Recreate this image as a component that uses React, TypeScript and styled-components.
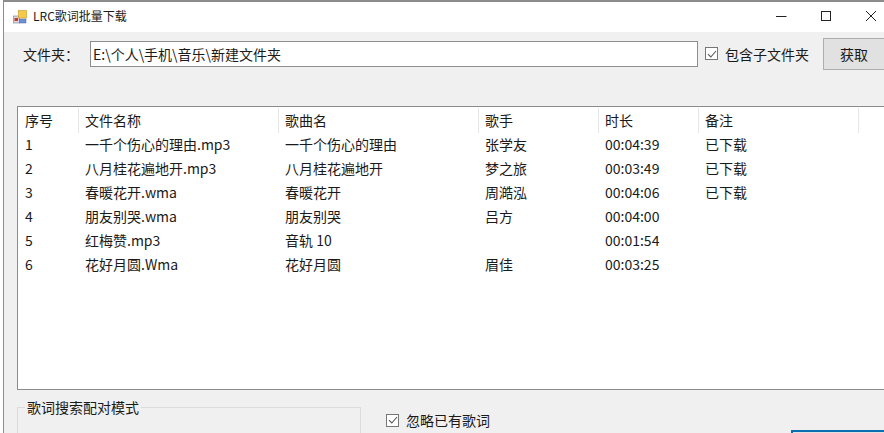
import React from "react";
import styled, { createGlobalStyle } from "styled-components";

const Global = createGlobalStyle`
  html, body { margin: 0; padding: 0; background: #fff; overflow: hidden; }
  body { font-family: "Noto Sans CJK SC", "Liberation Sans", sans-serif; font-size: 14px; color: #1a1a1a; }
`;
const Frame = styled.div`
  width: 884px; height: 433px; overflow: hidden; box-sizing: border-box;
  padding-left: 3px; background: #fff; display: flex;
`;
const Win = styled.div`
  flex: 1; min-width: 0; display: flex; flex-direction: column;
  border-left: 1px solid #8c8c8c; border-top: 2px solid #8c8c8c;
`;
const TitleBar = styled.div`
  height: 30px; background: #fff; display: flex; align-items: center; padding-left: 9px; flex: none;
`;
const TitleText = styled.span`
  font-size: 12px; margin-left: 6px; line-height: 16px; position: relative; top: -1px;
`;
const WinButtons = styled.div`
  margin-left: auto; display: flex; align-items: center; height: 100%;
`;
const WinBtn = styled.div`
  width: 45px; height: 100%; display: flex; align-items: center; justify-content: center;
  position: relative; top: -1px; left: 9px;
`;
const Body = styled.div`
  flex: 1; background: #f0f0f0; display: flex; flex-direction: column; min-height: 0;
`;
const PathRow = styled.div`
  display: flex; align-items: center; height: 37px; margin-top: 3px; padding-left: 19px; flex: none;
`;
const PathLabel = styled.span`
  width: 67px; flex: none; line-height: 18px;
`;
const PathInput = styled.div`
  width: 608px; height: 26px; box-sizing: border-box; flex: none; background: #fff;
  border: 1px solid #8e8e8e; padding-left: 2px; line-height: 25px;
`;
const Check = styled.span`
  width: 11px; height: 11px; border: 1px solid #767676; background: #fff; flex: none;
  display: inline-flex; align-items: center; justify-content: center;
`;
const CheckRow = styled.label`
  display: flex; align-items: center; gap: 7px; line-height: 18px; white-space: nowrap; flex: none;
`;
const TopCheck = styled(CheckRow)`margin-left: 7px;`;
const FetchBtn = styled.button`
  width: 62px; height: 32px; margin-left: 14px; flex: none; font: inherit; color: inherit;
  background: #e1e1e1; border: 1px solid #adadad; padding: 0;
`;
const Table = styled.div`
  margin: 34px 0 0 13px; height: 284px; box-sizing: border-box; flex: none; background: #fff;
  border-top: 1px solid #8c8c8c; border-left: 1px solid #8c8c8c; border-bottom: 1px solid #8c8c8c;
  padding-top: 1px;
`;
const cols = "61px 200px 200px 120px 100px 160px 1fr";
const Header = styled.div`
  display: grid; grid-template-columns: ${cols}; height: 24px;
`;
const HeadCell = styled.div`
  padding-left: 6px; line-height: 25px; border-right: 1px solid #e6e6e6;
  &:first-child { padding-left: 7px; }
  &:last-child { border-right: 0; }
`;
const Row = styled.div`
  display: grid; grid-template-columns: ${cols}; height: 24px; line-height: 24px;
`;
const Cell = styled.div`
  padding-left: 6px; white-space: nowrap; overflow: hidden;
  &:first-child { padding-left: 7px; }
`;
const Bottom = styled.div`
  display: flex; margin: 0 0 0 13px; flex: 1; position: relative; min-height: 0;
`;
const Group = styled.fieldset`
  width: 344px; box-sizing: border-box; margin: 8px 0 0 0; padding: 0; height: 40px; flex: none;
  border: 1px solid #dcdcdc;
`;
const Legend = styled.legend`
  margin-left: 7px; padding: 0 2px 0 2px; line-height: 18px;
`;
const BottomCheck = styled(CheckRow)`
  margin: 21px 0 0 25px; height: 18px;
`;
const BlueButton = styled.div`
  position: absolute; left: 775px; top: 41px; width: 100px; height: 30px;
  background: #e1e1e1; border: 1px solid #0a6fb0; box-shadow: 0 0 0 1px #0a6fb0;
`;

const tick = (
  <svg width="10" height="10" viewBox="0 0 10 10"><path d="M1 5.2 L3.8 8 L9 2" fill="none" stroke="#555" strokeWidth="1.1" /></svg>
);
const AppIcon = () => (
  <svg width="14" height="14" viewBox="0 0 14 14">
    <rect x="0.5" y="6" width="6" height="7" fill="#d9d9e3" stroke="#7a7a8c" strokeWidth="0.6" />
    <rect x="1.5" y="8" width="3.5" height="3" fill="#c73b1f" />
    <rect x="5.5" y="0.5" width="8" height="7.5" fill="#f6c94a" stroke="#c79a25" strokeWidth="0.6" />
    <rect x="6.5" y="9" width="6.5" height="4" fill="#6e8fd6" stroke="#4a64a8" strokeWidth="0.5" />
  </svg>
);

const heads = ["序号", "文件名称", "歌曲名", "歌手", "时长", "备注", ""];
const rows = [
  ["1", "一千个伤心的理由.mp3", "一千个伤心的理由", "张学友", "00:04:39", "已下载"],
  ["2", "八月桂花遍地开.mp3", "八月桂花遍地开", "梦之旅", "00:03:49", "已下载"],
  ["3", "春暖花开.wma", "春暖花开", "周澔泓", "00:04:06", "已下载"],
  ["4", "朋友别哭.wma", "朋友别哭", "吕方", "00:04:00", ""],
  ["5", "红梅赞.mp3", "音轨 10", "", "00:01:54", ""],
  ["6", "花好月圆.Wma", "花好月圆", "眉佳", "00:03:25", ""],
];

export default function App() {
  return (
    <Frame>
      <Global />
      <Win>
        <TitleBar>
          <AppIcon />
          <TitleText>LRC歌词批量下载</TitleText>
          <WinButtons>
            <WinBtn><svg width="12" height="12" viewBox="0 0 12 12"><path d="M1 6.5H11.5" stroke="#222" /></svg></WinBtn>
            <WinBtn><svg width="12" height="12" viewBox="0 0 12 12"><rect x="1.5" y="1.5" width="9" height="9" fill="none" stroke="#222" /></svg></WinBtn>
            <WinBtn><svg width="12" height="12" viewBox="0 0 12 12"><path d="M1 1L11 11M11 1L1 11" stroke="#222" /></svg></WinBtn>
          </WinButtons>
        </TitleBar>
        <Body>
          <PathRow>
            <PathLabel>文件夹：</PathLabel>
            <PathInput>E:\个人\手机\音乐\新建文件夹</PathInput>
            <TopCheck><Check>{tick}</Check>包含子文件夹</TopCheck>
            <FetchBtn>获取</FetchBtn>
          </PathRow>
          <Table>
            <Header>
              {heads.map((h, i) => <HeadCell key={i}>{h}</HeadCell>)}
            </Header>
            {rows.map((r) => (
              <Row key={r[0]}>
                {r.map((c, i) => <Cell key={i}>{c}</Cell>)}
              </Row>
            ))}
          </Table>
          <Bottom>
            <Group><Legend>歌词搜索配对模式</Legend></Group>
            <BottomCheck><Check>{tick}</Check>忽略已有歌词</BottomCheck>
            <BlueButton />
          </Bottom>
        </Body>
      </Win>
    </Frame>
  );
}
